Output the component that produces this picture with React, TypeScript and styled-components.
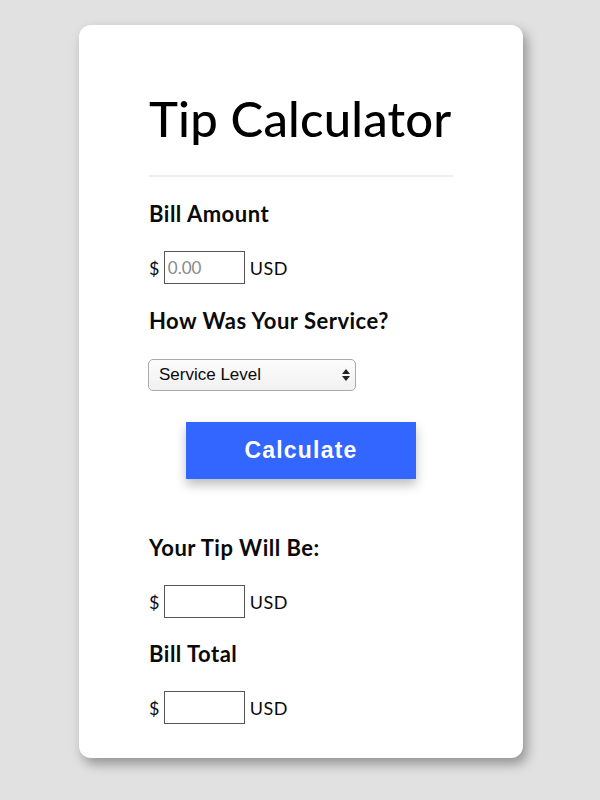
import styled, { createGlobalStyle } from "styled-components";

const GlobalStyle = createGlobalStyle`
  html, body {
    margin: 0;
    padding: 0;
    background: #e1e1e1;
  }
  body {
    font-family: Lato, "Liberation Sans", sans-serif;
    color: #0a0a0a;
  }
`;

const Page = styled.div`
  width: 600px;
  height: 800px;
  padding-top: 25px;
  box-sizing: border-box;
  display: flex;
  justify-content: center;
  padding-left: 2px;
`;

const Card = styled.div`
  width: 444px;
  height: 733px;
  box-sizing: border-box;
  background: #fff;
  border-radius: 12px;
  box-shadow: 4px 6px 12px rgba(0, 0, 0, 0.35);
  padding: 65px 70px 0;
`;

const Title = styled.h1`
  margin: 0;
  font-size: 49px;
  font-weight: 500;
  line-height: 56px;
  letter-spacing: 0.2px;
  white-space: nowrap;
  color: #000;
`;

const Rule = styled.hr`
  margin: 29px 0 0;
  border: none;
  border-top: 2px solid #efefef;
`;

const Label = styled.h3<{ $top: number }>`
  margin: ${(p) => p.$top}px 0 0;
  font-size: 22px;
  font-weight: 700;
  line-height: 26px;
  letter-spacing: 0.5px;
`;

const AmountRow = styled.div`
  display: flex;
  align-items: center;
  margin-top: 24px;
  font-size: 18px;
  letter-spacing: 0.4px;
  gap: 4px;
  & > span:last-child {
    margin-left: 1px;
  }
`;

const AmountInput = styled.input`
  width: 81px;
  height: 33px;
  box-sizing: border-box;
  border: 1px solid #555;
  font-family: Lato, "Liberation Sans", sans-serif;
  font-size: 17px;
  padding: 0 3px;
  color: #111;
  &::placeholder {
    color: #8a8a8a;
  }
`;

const SelectWrap = styled.div`
  margin-top: 25px;
  width: 208px;
  height: 32px;
  box-sizing: border-box;
  border: 1px solid #aaa;
  border-radius: 5px;
  background: linear-gradient(#fcfcfc, #f1f1f1);
  display: flex;
  align-items: center;
  justify-content: space-between;
  padding: 0 4px 0 10px;
  font-family: "Liberation Sans", Arial, sans-serif;
  font-size: 17px;
  margin-left: -1px;
`;

const ButtonRow = styled.div`
  display: flex;
  justify-content: center;
  margin-top: 31px;
`;

const CalcButton = styled.button`
  width: 230px;
  height: 57px;
  border: none;
  background: #3366ff;
  color: #fff;
  font-family: "Liberation Sans", Arial, sans-serif;
  font-size: 23px;
  font-weight: 700;
  letter-spacing: 1.2px;
  box-shadow: 0 6px 10px rgba(0, 0, 0, 0.25);
`;

const Amount = ({ placeholder }: { placeholder?: string }) => (
  <AmountRow>
    <span>$</span>
    <AmountInput placeholder={placeholder} />
    <span>USD</span>
  </AmountRow>
);

export default function App() {
  return (
    <>
      <GlobalStyle />
      <Page>
        <Card>
          <Title>Tip Calculator</Title>
          <Rule />
          <Label $top={24}>Bill Amount</Label>
          <Amount placeholder="0.00" />
          <Label $top={24}>How Was Your Service?</Label>
          <SelectWrap>
            <span>Service Level</span>
            <svg width="10" height="14" viewBox="0 0 10 14">
              <path d="M1 6 L5 1 L9 6 Z M1 8 L5 13 L9 8 Z" fill="#222" />
            </svg>
          </SelectWrap>
          <ButtonRow>
            <CalcButton>Calculate</CalcButton>
          </ButtonRow>
          <Label $top={56}>Your Tip Will Be:</Label>
          <Amount />
          <Label $top={23}>Bill Total</Label>
          <Amount />
        </Card>
      </Page>
    </>
  );
}
